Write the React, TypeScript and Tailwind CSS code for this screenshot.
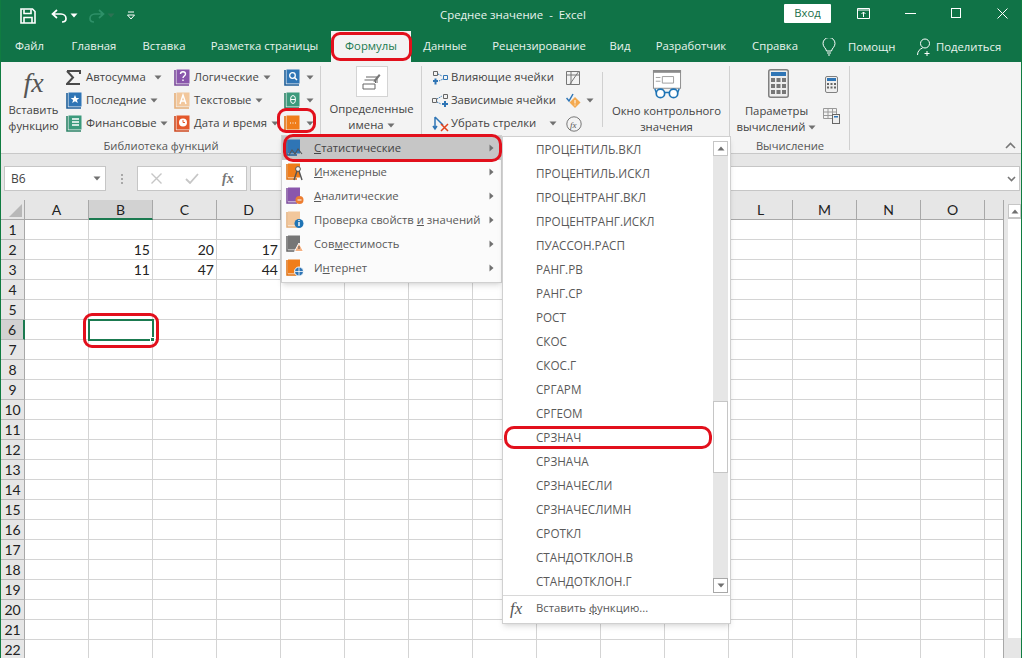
import React from 'react';

const uiFont = "font-['Open_Sans','Noto_Sans',sans-serif]";

const tabs = [
  { label: 'Файл', w: 'w-[57px]' },
  { label: 'Главная', w: 'w-[72px]' },
  { label: 'Вставка', w: 'w-[68px]' },
  { label: 'Разметка страницы', w: 'w-[133px]' },
  { label: 'Формулы', w: 'w-[80px]', active: true },
  { label: 'Данные', w: 'w-[68px]' },
  { label: 'Рецензирование', w: 'w-[120px]' },
  { label: 'Вид', w: 'w-[42px]' },
  { label: 'Разработчик', w: 'w-[100px]' },
  { label: 'Справка', w: 'w-[68px]' },
];

const columns = ['A', 'B', 'C', 'D', 'E', 'F', 'G', 'H', 'I', 'J', 'K', 'L', 'M', 'N', 'O'];
// these column headers sit behind the open menus
const hiddenHeaders = ['E', 'F', 'G', 'H', 'I', 'J', 'K'];
const rows = Array.from({ length: 22 }, (_, i) => i + 1);
const values: Record<string, string> = { B2: '15', C2: '20', D2: '17', B3: '11', C3: '47', D3: '44' };

const functionNames = [
  'ПРОЦЕНТИЛЬ.ВКЛ', 'ПРОЦЕНТИЛЬ.ИСКЛ', 'ПРОЦЕНТРАНГ.ВКЛ', 'ПРОЦЕНТРАНГ.ИСКЛ', 'ПУАССОН.РАСП', 'РАНГ.РВ',
  'РАНГ.СР', 'РОСТ', 'СКОС', 'СКОС.Г', 'СРГАРМ', 'СРГЕОМ', 'СРЗНАЧ', 'СРЗНАЧА', 'СРЗНАЧЕСЛИ', 'СРЗНАЧЕСЛИМН',
  'СРОТКЛ', 'СТАНДОТКЛОН.В', 'СТАНДОТКЛОН.Г',
];

const Caret = ({ className = '' }: { className?: string }) => (
  <svg width="8" height="5" viewBox="0 0 8 5" className={className}>
    <path d="M0.5 0.5h7L4 4.5z" fill="#707070" />
  </svg>
);

const Book = ({ color, spine, children }: { color: string; spine: string; children?: React.ReactNode }) => (
  <svg width="16" height="17" viewBox="0 0 16 17" className="shrink-0">
    <rect x="2.5" y="0.5" width="13" height="14" fill={color} />
    <path d="M1 1v15h14" fill="none" stroke={spine} strokeWidth="1.6" />
    {children}
  </svg>
);

const Sigma = () => (
  <svg width="16" height="15" viewBox="0 0 16 15" className="shrink-0">
    <path d="M1 1h13v3M14 14H1l6-6.5L1 1" fill="none" stroke="#4a4a4a" strokeWidth="2" />
  </svg>
);

const SmallButton = ({ icon, label, caretClass }: { icon: React.ReactNode; label?: string; caretClass: string }) => (
  <div className="flex h-[23px] items-center">
    {icon}
    {label && <span className="ml-[4px] whitespace-nowrap">{label}</span>}
    <Caret className={caretClass} />
  </div>
);

const Group = ({ w, label, children }: { w: string; label?: string; children: React.ReactNode }) => (
  <div className={`${w} relative flex shrink-0 flex-col`}>
    <div className="flex h-[73px] pt-[4px]">{children}</div>
    {label && <div className="mt-[4px] text-center text-[11.2px] leading-[14px] text-[#555]">{label}</div>}
    <div className="absolute right-0 top-[4px] h-[84px] w-px bg-[#d0d0d0]" />
  </div>
);

const MenuIcon = ({ color, spine, children }: { color: string; spine: string; children?: React.ReactNode }) => (
  <svg width="18" height="18" viewBox="0 0 18 18" className="shrink-0">
    <rect x="2" y="0.5" width="12" height="14" fill={color} />
    <path d="M1 1v15h10" fill="none" stroke={spine} strokeWidth="1.5" />
    {children}
  </svg>
);

const flyoutItems: { node: React.ReactNode; icon: React.ReactNode; selected?: boolean }[] = [
  {
    selected: true,
    node: <><u>С</u>татистические</>,
    icon: (
      <MenuIcon color="#2f75b5" spine="#1f5f99">
        <path d="M3 16l3-5 3 4 3-5 4 5" fill="none" stroke="#555" strokeWidth="1.1" />
      </MenuIcon>
    ),
  },
  {
    node: <><u>И</u>нженерные</>,
    icon: (
      <MenuIcon color="#f07d1a" spine="#e0700f">
        <circle cx="12" cy="6" r="2.4" fill="#f8f8f8" stroke="#555" />
        <path d="M11 8l-3 9M13 8l3 9" stroke="#555" strokeWidth="1.4" />
      </MenuIcon>
    ),
  },
  {
    node: <><u>А</u>налитические</>,
    icon: (
      <MenuIcon color="#8a56ac" spine="#7b4a9c">
        <circle cx="13.5" cy="13" r="4" fill="#ed7d31" />
        <path d="M11.5 13h4" stroke="#fff" />
      </MenuIcon>
    ),
  },
  {
    node: <>Проверка свойств <u>и</u> значений</>,
    icon: (
      <MenuIcon color="#f2c79c" spine="#e5ae78">
        <circle cx="13" cy="12.5" r="4.5" fill="#1f74b5" />
        <path d="M13 11v4M13 9v1" stroke="#fff" strokeWidth="1.4" />
      </MenuIcon>
    ),
  },
  {
    node: <>Сов<u>м</u>естимость</>,
    icon: (
      <MenuIcon color="#767676" spine="#666">
        <path d="M13 8l4.5 8.5h-9z" fill="#f4b183" stroke="#fff" />
        <path d="M13 11v3" stroke="#555" />
      </MenuIcon>
    ),
  },
  {
    node: <>И<u>н</u>тернет</>,
    icon: (
      <MenuIcon color="#f07d1a" spine="#e0700f">
        <circle cx="13" cy="12.5" r="4.5" fill="#2f75b5" stroke="#fff" />
        <path d="M9 12.5h8M13 8.5v8" stroke="#fff" strokeWidth="0.8" />
      </MenuIcon>
    ),
  },
];

const RedOutline = ({ className }: { className: string }) => (
  <div className={`pointer-events-none absolute border-[3px] border-[#e2101c] ${className}`} />
);

const TitleBar = () => (
  <div className="relative flex h-[31px] shrink-0 items-center text-[#e8f3ee]">
    <svg width="16" height="16" viewBox="0 0 16 16" className="ml-[19px]">
      <path d="M1 1h11.5L15 3.5V15H1z" fill="none" stroke="#fff" strokeWidth="1.6" />
      <path d="M4 1.5v4h7v-4M4 15v-5.5h8V15" fill="none" stroke="#fff" strokeWidth="1.6" />
    </svg>
    <svg width="17" height="14" viewBox="0 0 17 14" className="ml-[15px]">
      <path d="M6 1L1.5 5 6 9M2 5h8c3 0 5 2 5 4.5S13.500 13 11 13" fill="none" stroke="#fff" strokeWidth="1.7" />
    </svg>
    <Caret className="ml-[2px] brightness-[3]" />
    <svg width="17" height="14" viewBox="0 0 17 14" className="ml-[10px]">
      <path d="M11 1l4.500 4L11 9M15 5H7c-3 0-5 2-5 4.500S3.500 13 6 13" fill="none" stroke="#2e9068" strokeWidth="1.7" />
    </svg>
    <Caret className="ml-[2px] opacity-30" />
    <svg width="8" height="9" viewBox="0 0 8 9" className="ml-[12px]">
      <path d="M1 1h6M0.500 4h7L4 8z" fill="none" stroke="#fff" strokeWidth="1" />
    </svg>
    <div className={`absolute left-[439px] top-[6px] whitespace-pre text-[11.4px] ${uiFont}`}>Среднее значение  -  Excel</div>
    <div className={`absolute left-[783px] top-[4px] flex h-[19px] w-[47px] items-center justify-center rounded-[1px] bg-white text-[11.3px] text-[#1b6e4a] ${uiFont}`}>
      Вход
    </div>
    <svg width="13" height="11" viewBox="0 0 13 11" className="absolute left-[856px] top-[8px]">
      <path d="M0.500 0.500h12v10H0.500zM1 2h11M6.500 9V4M4.500 6l2-2 2 2" fill="none" stroke="#fff" />
    </svg>
    <div className="absolute left-[904px] top-[13px] h-px w-[11px] bg-white" />
    <div className="absolute left-[950px] top-[8px] h-[10px] w-[10px] border border-white" />
    <svg width="11" height="11" viewBox="0 0 11 11" className="absolute left-[996px] top-[8px]">
      <path d="M0.500 0.500l10 10M10.500 0.500l-10 10" stroke="#fff" />
    </svg>
  </div>
);

const TabRow = () => (
  <div className={`relative flex h-[31px] shrink-0 items-end text-[11.3px] text-[#e8f3ee] ${uiFont}`}>
    {tabs.map((t) => (
      <div
        key={t.label}
        className={`${t.w} flex h-[31px] shrink-0 items-center justify-center whitespace-nowrap ${t.active ? 'bg-[#f3f3f3] text-[#1b7a50]' : ''}`}
      >
        {t.label}
      </div>
    ))}
    <svg width="14" height="18" viewBox="0 0 14 18" className="absolute left-[821px] top-[7px]">
      <path d="M4.500 13C4 10 1 9 1 5.500a6 6 0 0 1 12 0C13 9 10 10 9.500 13zM5 15h4M6 17h2" fill="none" stroke="#fff" />
    </svg>
    <div className="absolute left-[847px] top-[8px]">Помощн</div>
    <svg width="16" height="18" viewBox="0 0 16 18" className="absolute left-[916px] top-[7px]">
      <circle cx="8" cy="5.500" r="4.500" fill="none" stroke="#fff" />
      <path d="M0.500 17c0-4 2.500-6 5-7M10 13v5M7.500 15.500h5" fill="none" stroke="#fff" />
    </svg>
    <div className="absolute left-[935px] top-[8px]">Поделиться</div>
  </div>
);

const Ribbon = () => (
  <div className={`relative flex h-[92px] shrink-0 border-b border-[#c8c8c8] bg-[#f3f3f3] text-[11.3px] text-[#444] ${uiFont}`}>
    <Group w="w-[320px]" label="Библиотека функций">
      <div className="flex w-[65px] shrink-0 flex-col items-center">
        <span className="font-['Liberation_Serif',serif] text-[28px] italic leading-[34px] text-[#555]">fx</span>
        <span className="mt-[2px] text-center leading-[16px]">
          Вставить
          <br />
          функцию
        </span>
      </div>
      <div className="w-[107px] shrink-0">
        <SmallButton icon={<Sigma />} label="Автосумма" caretClass="ml-[8px]" />
        <SmallButton
          icon={
            <Book color="#2f75b5" spine="#1f5f99">
              <path d="M9 3l1.300 3h3l-2.400 2 .9 3-2.800-1.800L6.200 11l.9-3-2.400-2h3z" fill="#fff" />
            </Book>
          }
          label="Последние"
          caretClass="ml-[4px]"
        />
        <SmallButton
          icon={
            <Book color="#3c9a7c" spine="#2e8468">
              <path d="M6 4h7M6 7h7M6 10h7" stroke="#fff" strokeWidth="1.300" />
            </Book>
          }
          label="Финансовые"
          caretClass="ml-[4px]"
        />
      </div>
      <div className="w-[111px] shrink-0 pl-[1px]">
        <SmallButton
          icon={
            <Book color="#8a56ac" spine="#7b4a9c">
              <path d="M6.500 5c0-3 5-3 5 0 0 2-2.500 2-2.500 4M9 10.500v1.500" fill="none" stroke="#fff" strokeWidth="1.400" />
            </Book>
          }
          label="Логические"
          caretClass="ml-[4px]"
        />
        <SmallButton
          icon={
            <Book color="#f2c79c" spine="#e5ae78">
              <path d="M6 12l3-9 3 9M7 9h4" fill="none" stroke="#fff" strokeWidth="1.400" />
            </Book>
          }
          label="Текстовые"
          caretClass="ml-[4px]"
        />
        <SmallButton
          icon={
            <Book color="#e4582b" spine="#cf4a20">
              <circle cx="9" cy="7.500" r="4" fill="#fff" />
              <path d="M9 5v2.500h2" fill="none" stroke="#e4582b" />
            </Book>
          }
          label="Дата и время"
          caretClass="ml-[4px]"
        />
      </div>
      <div className="shrink-0">
        <SmallButton
          icon={
            <Book color="#2f75b5" spine="#1f5f99">
              <circle cx="8.500" cy="6.500" r="2.800" fill="none" stroke="#fff" strokeWidth="1.300" />
              <path d="M10.500 8.500l2.500 2.500" stroke="#fff" strokeWidth="1.500" />
            </Book>
          }
          caretClass="ml-[6px]"
        />
        <SmallButton
          icon={
            <Book color="#3c9a7c" spine="#2e8468">
              <ellipse cx="9" cy="7.500" rx="2.500" ry="4" fill="none" stroke="#fff" />
              <path d="M6.500 7.500h5" stroke="#fff" />
            </Book>
          }
          caretClass="ml-[6px]"
        />
        <SmallButton
          icon={
            <Book color="#f07d1a" spine="#e0700f">
              <path d="M6 8h1M8.500 8h1M11 8h1" stroke="#fff" />
            </Book>
          }
          caretClass="ml-[6px]"
        />
      </div>
    </Group>

    <Group w="w-[101px]">
      <div className="flex w-full flex-col items-center">
        <div className="flex h-[31px] w-[32px] items-center justify-center border border-[#d4d4d4] bg-white">
          <svg width="20" height="20" viewBox="0 0 20 20">
            <path d="M4 5h11v6M2.500 8h11v3M1 12h12v5H1z" fill="none" stroke="#666" />
            <path d="M17 2l1.500 1.500-5 6-2 .5.5-2z" fill="#777" />
          </svg>
        </div>
        <span className="mt-[4px] text-center leading-[16px]">
          Определенные
          <br />
          имена
          <Caret className="ml-[3px] inline" />
        </span>
      </div>
    </Group>

    <div className="relative flex w-[181px] shrink-0 pl-[10px] pt-[4px]">
      <div className="w-[134px] shrink-0">
        <div className="flex h-[23px] items-center">
          <svg width="17" height="16" viewBox="0 0 17 16" className="shrink-0">
            <path d="M1.500 1.500h4v4h-4z" fill="none" stroke="#666" />
            <path d="M11.500 5.500h4v4h-4z" fill="none" stroke="#2f75b5" />
            <path d="M1 11h5M3.500 8.500v6" stroke="#2f75b5" strokeWidth="2" />
            <path d="M6 4l4 2M7 11l4-2" stroke="#2f75b5" strokeDasharray="1.500 1" />
          </svg>
          <span className="ml-[2px] whitespace-nowrap">Влияющие ячейки</span>
        </div>
        <div className="flex h-[23px] items-center">
          <svg width="17" height="16" viewBox="0 0 17 16" className="shrink-0">
            <path d="M0.500 5.500h4v4h-4z" fill="none" stroke="#666" />
            <path d="M11.500 1.500h4v4h-4z" fill="none" stroke="#666" />
            <path d="M10 11h6M13 8v6" stroke="#2f75b5" strokeWidth="2" />
            <path d="M5 6l5-3M5 9l4 2" stroke="#2f75b5" strokeDasharray="1.500 1" />
          </svg>
          <span className="ml-[2px] whitespace-nowrap">Зависимые ячейки</span>
        </div>
        <div className="flex h-[23px] items-center">
          <svg width="17" height="17" viewBox="0 0 17 17" className="shrink-0">
            <path d="M3 2v11M1 11l2 3 2-3M3 2l8 8" fill="none" stroke="#2f75b5" strokeWidth="1.500" />
            <path d="M9 9l7 7M16 9l-7 7" stroke="#e2421c" strokeWidth="1.500" />
          </svg>
          <span className="ml-[2px] whitespace-nowrap">Убрать стрелки</span>
          <Caret className="ml-[13px]" />
        </div>
      </div>
      <div className="shrink-0">
        <div className="flex h-[23px] items-center">
          <svg width="16" height="16" viewBox="0 0 16 16">
            <path d="M0.500 1.500h13v13h-13zM1 5h12M5 1v13M13 1L4 14" fill="none" stroke="#777" />
          </svg>
        </div>
        <div className="flex h-[23px] items-center">
          <svg width="16" height="15" viewBox="0 0 16 15">
            <path d="M0.500 5l2.500 3 4-7" fill="none" stroke="#2f75b5" strokeWidth="1.500" />
            <path d="M9 4l5.500 5.500L9 15l-5.500-5.500z" fill="#f4a94f" />
            <path d="M9 7v3.500M9 11.500v1" stroke="#fff" />
          </svg>
          <Caret className="ml-[4px]" />
        </div>
        <div className="flex h-[23px] items-center">
          <svg width="16" height="16" viewBox="0 0 16 16">
            <circle cx="8" cy="8" r="7.200" fill="none" stroke="#777" />
            <text x="4" y="11.500" fontSize="9" fontStyle="italic" fontFamily="Liberation Serif" fill="#555">fx</text>
          </svg>
        </div>
      </div>
      <div className="absolute right-0 top-[10px] h-[55px] w-px bg-[#d0d0d0]" />
    </div>

    <Group w="w-[127px]">
      <div className="flex w-full flex-col items-center">
        <svg width="30" height="31" viewBox="0 0 30 31" className="mt-[4px]">
          <rect x="0.500" y="0.500" width="29" height="19" fill="#fff" stroke="#888" />
          <rect x="0" y="0" width="30" height="3" fill="#8a8a8a" />
          <path d="M3 8h5M3 12h5M10 7h12v7H10z" fill="none" stroke="#9a9a9a" />
          <circle cx="8" cy="25" r="4.500" fill="#fff" stroke="#1f74b5" strokeWidth="1.800" />
          <circle cx="22" cy="25" r="4.500" fill="#fff" stroke="#1f74b5" strokeWidth="1.800" />
          <path d="M12 24h6M3.500 24L2 20M26.500 24l1.500-4" stroke="#1f74b5" strokeWidth="1.500" />
        </svg>
        <span className="mt-[4px] text-center leading-[16px] whitespace-nowrap">
          Окно контрольного
          <br />
          значения
        </span>
      </div>
    </Group>

    <Group w="w-[120px]" label="Вычисление">
      <div className="flex w-[93px] shrink-0 flex-col items-center">
        <svg width="21" height="29" viewBox="0 0 21 29" className="ml-[4px] mt-[3px]">
          <rect x="0.750" y="0.750" width="19.500" height="27.500" rx="2" fill="#eee" stroke="#808080" strokeWidth="1.500" />
          <rect x="3" y="3" width="15" height="4" fill="#2f75b5" />
          <path d="M3 9h4v4H3zM8.500 9h4v4h-4zM14 9h4v4h-4zM3 15h4v4H3zM8.500 15h4v4h-4zM14 15h4v4h-4zM3 21h4v4H3zM8.500 21h4v4h-4zM14 21h4v4h-4z" fill="#777" />
        </svg>
        <span className="mt-[5px] text-center leading-[16px] whitespace-nowrap">
          Параметры
          <br />
          вычислений
          <Caret className="ml-[3px] inline" />
        </span>
      </div>
      <div className="flex shrink-0 flex-col items-start">
        <svg width="13" height="17" viewBox="0 0 13 17" className="ml-[2px] mt-[10px]">
          <rect x="0.500" y="0.500" width="12" height="16" rx="1.500" fill="#eee" stroke="#808080" />
          <rect x="2" y="2" width="9" height="3" fill="#2f75b5" />
          <path d="M2 7h2v2H2zM5.500 7h2v2h-2zM9 7h2v2H9zM2 10.500h2v2H2zM5.500 10.500h2v2h-2zM9 10.500h2v2H9z" fill="#666" />
        </svg>
        <svg width="17" height="16" viewBox="0 0 17 16" className="mt-[15px]">
          <path d="M0.500 0.500h13v10h-13zM0.500 4h13M0.500 7.500h13M5 0.500v10M9.500 0.500v10" fill="none" stroke="#999" />
          <rect x="9.500" y="6.500" width="7" height="9" fill="#eee" stroke="#666" />
          <rect x="11" y="8" width="4" height="1.500" fill="#2f75b5" />
        </svg>
      </div>
    </Group>

    <svg width="11" height="7" viewBox="0 0 11 7" className="absolute left-[1004px] top-[80px]">
      <path d="M1 6l4.500-4.500L10 6" fill="none" stroke="#777" strokeWidth="1.600" />
    </svg>
  </div>
);

const FormulaBar = () => (
  <div className={`flex h-[46px] shrink-0 bg-[#e6e6e6] pl-[3px] pt-[12px] ${uiFont}`}>
    <div className="flex h-[25px] w-[102px] items-center justify-between border border-[#c6c6c6] bg-white pl-[6px] pr-[4px] text-[12px] text-[#444]">
      B6
      <Caret />
    </div>
    <div className="ml-[15px] flex h-[25px] flex-col justify-center gap-[2px]">
      <span className="h-[2px] w-[2px] bg-[#a8a8a8]" />
      <span className="h-[2px] w-[2px] bg-[#a8a8a8]" />
      <span className="h-[2px] w-[2px] bg-[#a8a8a8]" />
    </div>
    <div className="ml-[14px] flex h-[25px] w-[110px] items-center border border-[#c6c6c6] bg-white">
      <svg width="11" height="11" viewBox="0 0 11 11" className="ml-[13px]">
        <path d="M0.500 0.500l10 10M10.500 0.500l-10 10" stroke="#c6c6c6" strokeWidth="1.400" />
      </svg>
      <svg width="14" height="11" viewBox="0 0 14 11" className="ml-[23px]">
        <path d="M1 6l4 4 8-9" fill="none" stroke="#c6c6c6" strokeWidth="1.800" />
      </svg>
      <span className="ml-[23px] font-['Liberation_Serif',serif] text-[14px] font-bold italic text-[#777]">fx</span>
    </div>
    <div className="ml-[3px] flex h-[25px] w-[770px] items-center justify-end border border-[#c6c6c6] bg-white pr-[3px]">
      <svg width="9" height="6" viewBox="0 0 9 6">
        <path d="M1 1l3.500 3.500L8 1" fill="none" stroke="#777" strokeWidth="1.600" />
      </svg>
    </div>
  </div>
);

const Sheet = () => (
  <div className="flex min-h-0 flex-1 bg-[#e6e6e6] font-['Lato',sans-serif] text-[14px] text-[#222]">
    <div className="w-[1002px] shrink-0">
      <div className="flex h-[20px]">
        <div className="flex w-[24px] shrink-0 items-end justify-end border-b border-r border-[#a8a8a8] p-[2px]">
          <svg width="13" height="13" viewBox="0 0 13 13">
            <path d="M13 0v13H0z" fill="#b8b8b8" />
          </svg>
        </div>
        {columns.map((c) => (
          <div
            key={c}
            className={`flex w-[64px] shrink-0 items-center justify-center border-r ${
              c === 'B' ? 'border-b-2 border-r-[#a8a8a8] border-b-[#1b7a50] bg-[#d2d2d2]' : 'border-b border-[#a8a8a8]'
            }`}
          >
            {!hiddenHeaders.includes(c) && c}
          </div>
        ))}
        <div className="flex-1 border-b border-[#a8a8a8]" />
      </div>
      {rows.map((r) => (
        <div key={r} className="flex h-[20px]">
          <div
            className={`flex w-[24px] shrink-0 items-center justify-center border-b border-[#b8b8b8] ${
              r === 6 ? 'border-r-2 border-r-[#1b7a50] bg-[#d2d2d2]' : 'border-r border-r-[#a8a8a8]'
            }`}
          >
            {r}
          </div>
          {columns.map((c) => (
            <div
              key={c}
              className="w-[64px] shrink-0 border-b border-r border-[#d4d4d4] bg-white pr-[2px] text-right leading-[19px]"
            >
              {values[`${c}${r}`]}
            </div>
          ))}
          <div className="flex-1 border-b border-[#d4d4d4] bg-white" />
        </div>
      ))}
    </div>
    <div className="w-px shrink-0 bg-[#a8a8a8]" />
    <div className="w-[4px] shrink-0" />
    <div className="w-[13px] shrink-0 pt-[4px]">
      <div className="flex h-[434px] flex-col bg-white">
        <div className="flex h-[15px] items-center justify-center border border-[#c6c6c6] border-b-2">
          <svg width="8" height="5" viewBox="0 0 8 5">
            <path d="M0.500 4.500h7L4 0.500z" fill="#707070" />
          </svg>
        </div>
      </div>
    </div>
  </div>
);

const FlyoutMenu = () => (
  <div className={`absolute left-[280px] top-[135px] w-[221px] border border-[#d0d0d0] bg-[#fbfbfb] pb-[2px] text-[11.3px] text-[#595959] shadow-md ${uiFont}`}>
    {flyoutItems.map((item, i) => (
      <div key={i} className={`flex h-[24px] items-center pl-[4px] pr-[7px] ${item.selected ? 'bg-[#c6c6c6] text-[#444]' : ''}`}>
        {item.icon}
        <span className="ml-[10px] flex-1 whitespace-nowrap">{item.node}</span>
        <svg width="5" height="8" viewBox="0 0 5 8">
          <path d="M0.500 0.500v7L4.500 4z" fill="#707070" />
        </svg>
      </div>
    ))}
  </div>
);

const FunctionMenu = () => (
  <div className={`absolute left-[501px] top-[136px] w-[229px] border border-[#d0d0d0] bg-white text-[11.7px] text-[#595959] shadow-md ${uiFont}`}>
    <div className="flex h-[458px]">
      <div className="flex-1 pl-[33px] pt-[1px]">
        {functionNames.map((name) => (
          <div key={name} className="flex h-[24px] items-center whitespace-nowrap">
            {name}
          </div>
        ))}
      </div>
      <div className="mr-[2px] mt-[4px] flex h-[452px] w-[15px] flex-col bg-[#e6e6e6]">
        <div className="flex h-[15px] items-center justify-center border border-[#c6c6c6] bg-white">
          <svg width="8" height="5" viewBox="0 0 8 5">
            <path d="M0.500 4.500h7L4 0.500z" fill="#707070" />
          </svg>
        </div>
        <div className="mt-[245px] h-[72px] border border-[#c6c6c6] bg-white" />
        <div className="mt-auto flex h-[15px] items-center justify-center border border-[#a8a8a8] bg-white">
          <Caret />
        </div>
      </div>
    </div>
    <div className="flex h-[28px] items-center border-t border-[#d8d8d8] pb-[2px]">
      <span className="ml-[7px] w-[26px] font-['Liberation_Serif',serif] text-[17px] italic text-[#555]">fx</span>
      <span className="text-[11.3px]">Вставить <u>ф</u>ункцию...</span>
    </div>
  </div>
);

export default function App() {
  return (
    <div className="relative flex h-[658px] w-[1022px] flex-col overflow-hidden border-x border-[#107c41] bg-[#107347]">
      <TitleBar />
      <TabRow />
      <Ribbon />
      <FormulaBar />
      <Sheet />

      {/* selected cell */}
      <div className="absolute left-[87px] top-[319px] h-[22px] w-[66px] border-2 border-[#1b7a50]">
        <div className="absolute bottom-[-3px] right-[-3px] h-[5px] w-[5px] border border-white bg-[#1b7a50]" />
      </div>

      <FlyoutMenu />
      <FunctionMenu />

      {/* red marks drawn over the screenshot */}
      <RedOutline className="left-[330px] top-[32px] h-[29px] w-[81px] rounded-[9px]" />
      <RedOutline className="left-[276px] top-[108px] h-[25px] w-[39px] rounded-[9px]" />
      <RedOutline className="left-[282px] top-[134px] h-[28px] w-[219px] rounded-[10px]" />
      <RedOutline className="left-[503px] top-[426px] h-[23px] w-[208px] rounded-[10px]" />
      <RedOutline className="left-[82px] top-[313px] h-[35px] w-[76px] rounded-[9px]" />
    </div>
  );
}
